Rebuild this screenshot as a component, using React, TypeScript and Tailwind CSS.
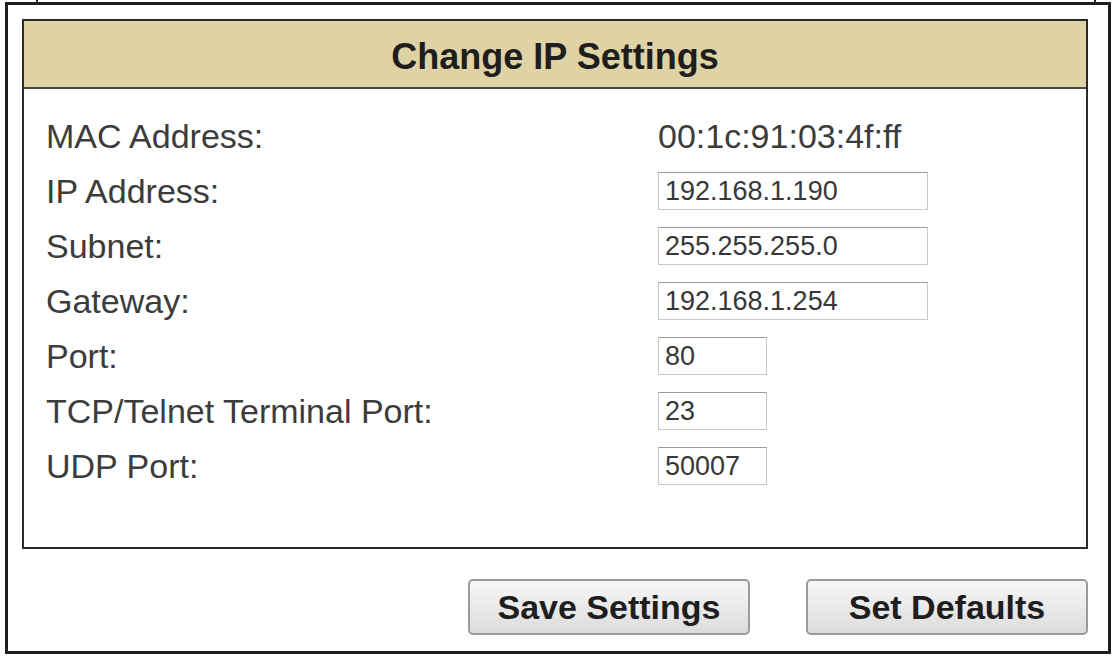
const rows: { label: string; value: string; kind: 'text' | 'wide' | 'short' }[] = [
  { label: 'MAC Address:', value: '00:1c:91:03:4f:ff', kind: 'text' },
  { label: 'IP Address:', value: '192.168.1.190', kind: 'wide' },
  { label: 'Subnet:', value: '255.255.255.0', kind: 'wide' },
  { label: 'Gateway:', value: '192.168.1.254', kind: 'wide' },
  { label: 'Port:', value: '80', kind: 'short' },
  { label: 'TCP/Telnet Terminal Port:', value: '23', kind: 'short' },
  { label: 'UDP Port:', value: '50007', kind: 'short' },
];

function Field({ value, kind }: { value: string; kind: 'text' | 'wide' | 'short' }) {
  if (kind === 'text') {
    return <span className="text-[34px] leading-none text-[#3c3c3c]">{value}</span>;
  }
  return (
    <input
      defaultValue={value}
      className={`${kind === 'wide' ? 'w-[270px]' : 'w-[109px]'} h-[38px] border border-[#c8c8c8] border-t-[#9a9a9a] bg-white pl-[6px] text-[27px] text-[#383838] outline-none`}
      style={{ fontFamily: '"Liberation Sans", Arial, sans-serif' }}
    />
  );
}

function Button({ children }: { children: string }) {
  return (
    <button className="w-[282px] h-[56px] rounded-[5px] border-2 border-[#9a9a9a] bg-gradient-to-b from-[#f7f7f7] to-[#dcdcdc] text-[34px] font-bold text-[#1e1e1e]">
      {children}
    </button>
  );
}

export default function App() {
  return (
    <div
      className="relative w-[1112px] h-[657px] bg-white pt-[2px] pl-[5px]"
      style={{ fontFamily: '"Liberation Sans", Arial, sans-serif' }}
    >
      <div className="absolute left-[36px] top-0 h-[3px] w-[2px] bg-[#222]" />
      <div className="absolute left-[1094px] top-0 h-[3px] w-[2px] bg-[#222]" />
      <div className="w-[1106px] h-[652px] border-[3px] border-[#1e1e1e] pl-[14px] pt-[14px]">
        <div className="w-[1066px] h-[530px] border-2 border-[#2a2a2a]">
          <div className="h-[68px] pt-[6px] bg-[#dfd2a4] border-b-2 border-[#4a4a40] flex items-center justify-center">
            <h1 className="text-[36px] font-bold text-[#1e1e1e]">Change IP Settings</h1>
          </div>
          <div className="pt-[28px] pl-[22px] grid grid-cols-[612px_1fr] gap-y-[17px]">
            {rows.map((r) => (
              <div key={r.label} className="contents">
                <div className="h-[38px] flex items-center text-[34px] text-[#3c3c3c] leading-none">{r.label}</div>
                <div className="h-[38px] flex items-center">
                  <Field value={r.value} kind={r.kind} />
                </div>
              </div>
            ))}
          </div>
        </div>
        <div className="w-[1066px] mt-[30px] flex justify-end gap-[56px]">
          <Button>Save Settings</Button>
          <Button>Set Defaults</Button>
        </div>
      </div>
    </div>
  );
}
